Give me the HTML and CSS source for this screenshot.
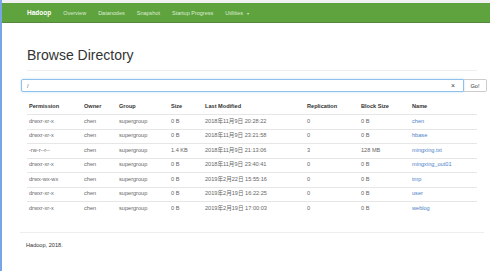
FILE: index.html
```html
<!DOCTYPE html>
<html lang="en">
<head>
<meta charset="utf-8">
<title>Browse Directory</title>
<link rel="stylesheet" href="styles.css">
</head>
<body>
<div class="page">
  <div class="topstrip"></div>
  <nav class="navbar">
    <span class="brand">Hadoop</span>
    <span class="nav-item">Overview</span>
    <span class="nav-item">Datanodes</span>
    <span class="nav-item">Snapshot</span>
    <span class="nav-item">Startup Progress</span>
    <span class="nav-item">Utilities <span class="caret">▾</span></span>
  </nav>
  <div class="container">
    <div class="page-header">
      <h1>Browse Directory</h1>
    </div>
    <div class="input-group">
      <div class="input"><span class="path">/</span><span class="clear">×</span></div>
      <div class="go">Go!</div>
    </div>
    <div class="table">
      <div class="row head">
        <span>Permission</span><span>Owner</span><span>Group</span><span>Size</span><span>Last Modified</span><span>Replication</span><span>Block Size</span><span>Name</span>
      </div>
      <div class="row">
        <span>drwxr-xr-x</span><span>chen</span><span>supergroup</span><span>0 B</span><span>2018年11月9日 20:28:22</span><span>0</span><span>0 B</span><span class="link">chen</span>
      </div>
      <div class="row">
        <span>drwxr-xr-x</span><span>chen</span><span>supergroup</span><span>0 B</span><span>2018年11月9日 23:21:58</span><span>0</span><span>0 B</span><span class="link">hbase</span>
      </div>
      <div class="row">
        <span>-rw-r--r--</span><span>chen</span><span>supergroup</span><span>1.4 KB</span><span>2018年11月9日 21:13:06</span><span>3</span><span>128 MB</span><span class="link">mingxing.txt</span>
      </div>
      <div class="row">
        <span>drwxr-xr-x</span><span>chen</span><span>supergroup</span><span>0 B</span><span>2018年11月9日 23:40:41</span><span>0</span><span>0 B</span><span class="link">mingxing_out01</span>
      </div>
      <div class="row">
        <span>drwx-wx-wx</span><span>chen</span><span>supergroup</span><span>0 B</span><span>2019年2月22日 15:55:16</span><span>0</span><span>0 B</span><span class="link">tmp</span>
      </div>
      <div class="row">
        <span>drwxr-xr-x</span><span>chen</span><span>supergroup</span><span>0 B</span><span>2019年2月19日 16:22:25</span><span>0</span><span>0 B</span><span class="link">user</span>
      </div>
      <div class="row">
        <span>drwxr-xr-x</span><span>chen</span><span>supergroup</span><span>0 B</span><span>2019年2月19日 17:00:03</span><span>0</span><span>0 B</span><span class="link">weblog</span>
      </div>
    </div>
  </div>
  <footer class="footer">
    <p>Hadoop, 2018.</p>
  </footer>
</div>
</body>
</html>
```
FILE: styles.css
```css
html, body {
  margin: 0;
  padding: 0;
  height: 100%;
  background: #ffffff;
}
body {
  font-family: "Liberation Sans", Arial, "Noto Sans CJK SC", sans-serif;
  color: #333333;
}
.page {
  min-height: 100%;
  border-left: 2px solid #78a5e8;
  box-sizing: border-box;
}
.topstrip {
  height: 3px;
  background: #f1f1f1;
}
.navbar {
  height: 20px;
  box-sizing: border-box;
  background: #5fa33f;
  border-bottom: 1px solid #55883f;
  display: flex;
  align-items: center;
  padding-left: 25px;
}
.brand {
  color: #ffffff;
  font-weight: bold;
  font-size: 6.5px;
  padding-right: 6px;
}
.nav-item {
  color: #dcecd3;
  font-size: 5.5px;
  padding: 0 6px;
}
.caret {
  font-size: 4px;
  margin-left: 2px;
}
.container {
  margin-left: 25px;
  width: 450px;
}
.page-header {
  padding-bottom: 7px;
  border-bottom: 1px solid #eeeeee;
}
h1 {
  margin: 24px 0 0;
  font-size: 14px;
  line-height: 16px;
  font-weight: normal;
  color: #333333;
}
.input-group {
  margin: 8px -10px 0 -6px;
  display: flex;
  height: 13px;
}
.input {
  flex: 1;
  box-sizing: border-box;
  border: 1px solid #8fc1ea;
  border-radius: 2px 0 0 2px;
  box-shadow: 0 0 2px rgba(102, 175, 233, 0.5);
  display: flex;
  align-items: center;
  justify-content: space-between;
  padding: 0 8px 0 5px;
  font-size: 5.6px;
  color: #555555;
}
.clear {
  font-size: 7px;
  color: #444444;
}
.go {
  width: 23px;
  box-sizing: border-box;
  border: 1px solid #cccccc;
  border-left: none;
  border-radius: 0 2px 2px 0;
  display: flex;
  align-items: center;
  justify-content: center;
  font-size: 5.6px;
  color: #333333;
}
.table {
  margin-top: 8px;
  font-size: 5.6px;
}
.row {
  display: grid;
  grid-template-columns: 55px 35px 52px 34px 102px 54px 51px 1fr;
  align-items: center;
  height: 14.5px;
  box-sizing: border-box;
  border-top: 1px solid #e6e6e6;
  color: #666666;
  line-height: 1;
}
.row span {
  padding-left: 2px;
  white-space: nowrap;
}
.row.head {
  height: 14px;
  border-top: none;
  font-weight: bold;
  color: #333333;
}
.link {
  color: #4a82c8;
}
.footer {
  margin: 16px 6px 0 18px;
  border-top: 1px solid #eeeeee;
}
.footer p {
  margin: 0;
  padding: 9px 0 0 6px;
  font-size: 5.6px;
  line-height: 6px;
  color: #333333;
}
```
